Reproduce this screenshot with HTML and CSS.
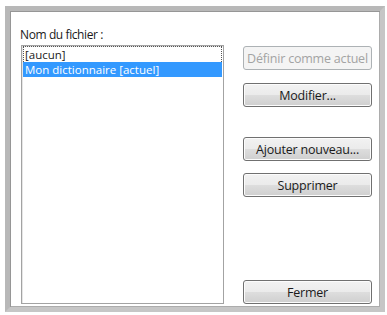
FILE: index.html
```html
<!DOCTYPE html>
<html lang="fr">
<head>
<meta charset="utf-8">
<link rel="stylesheet" href="styles.css">
</head>
<body>
<div class="frame">
  <div class="dialog">
    <div class="left">
      <div class="label">Nom du fichier :</div>
      <div class="listbox">
        <div class="row focus">[aucun]</div>
        <div class="row selected">Mon dictionnaire [actuel]</div>
      </div>
    </div>
    <div class="buttons">
      <button class="btn disabled b-def">Définir comme actuel</button>
      <button class="btn b-mod">Modifier...</button>
      <button class="btn b-add">Ajouter nouveau...</button>
      <button class="btn b-sup">Supprimer</button>
      <button class="btn b-close">Fermer</button>
    </div>
  </div>
</div>
</body>
</html>
```

FILE: styles.css
```css
html, body {
  margin: 0;
  padding: 0;
  background: #ffffff;
}
body {
  padding: 6px 2px 3px 5px;
  font-family: "Open Sans", "Noto Sans", sans-serif;
  font-size: 12px;
  color: #1a1a1a;
}
.frame {
  width: 380px;
  height: 306px;
  box-sizing: border-box;
  border: 5px solid #c6c6c6;
  border-top-color: #b8b8b8;
  border-left-color: #b8b8b8;
  box-shadow: inset 1px 1px 0 #969696, inset -1px -1px 0 #acacac;
  background: #fff;
}
.dialog {
  display: flex;
  height: 100%;
  box-sizing: border-box;
  padding: 0 8px 3px 10px;
}
.left {
  display: flex;
  flex-direction: column;
  width: 204px;
}
.label {
  height: 16px;
  line-height: 16px;
  margin-top: 16px;
  margin-bottom: 2px;
  letter-spacing: -0.4px;
}
.listbox {
  flex: 1;
  margin-left: 1px;
  border: 1px solid #a3a3a3;
  box-shadow: inset 1px 1px 0 #e6e6e6;
  padding: 0 1px;
  font-size: 11.5px;
}
.row {
  height: 15px;
  line-height: 15px;
  padding-left: 2px;
  white-space: nowrap;
  box-sizing: border-box;
}
.row.focus {
  border: 1px dotted #555;
  border-bottom: none;
  padding-left: 1px;
  height: 16px;
  line-height: 15px;
}
.row.selected {
  background: #3399ff;
  color: #fff;
}
.buttons {
  display: flex;
  flex-direction: column;
  width: 129px;
  margin-left: 19px;
  padding-top: 35px;
}
.btn {
  height: 24px;
  width: 129px;
  font-family: inherit;
  font-size: 12.5px;
  letter-spacing: -0.2px;
  color: #1a1a1a;
  border: 1px solid #707070;
  border-radius: 3px;
  background: linear-gradient(#f2f2f2 0%, #ebebeb 48%, #dddddd 52%, #cfcfcf 100%);
  box-shadow: inset 0 0 0 1px #fcfcfc;
  padding: 0;
  white-space: nowrap;
}
.btn.disabled {
  color: #a3a3a3;
  border-color: #adb2b5;
  background: #f4f4f4;
  box-shadow: none;
}
.b-mod { margin-top: 13px; }
.b-add { margin-top: 30px; }
.b-sup { margin-top: 12px; }
.b-close { margin-top: auto; }
```
